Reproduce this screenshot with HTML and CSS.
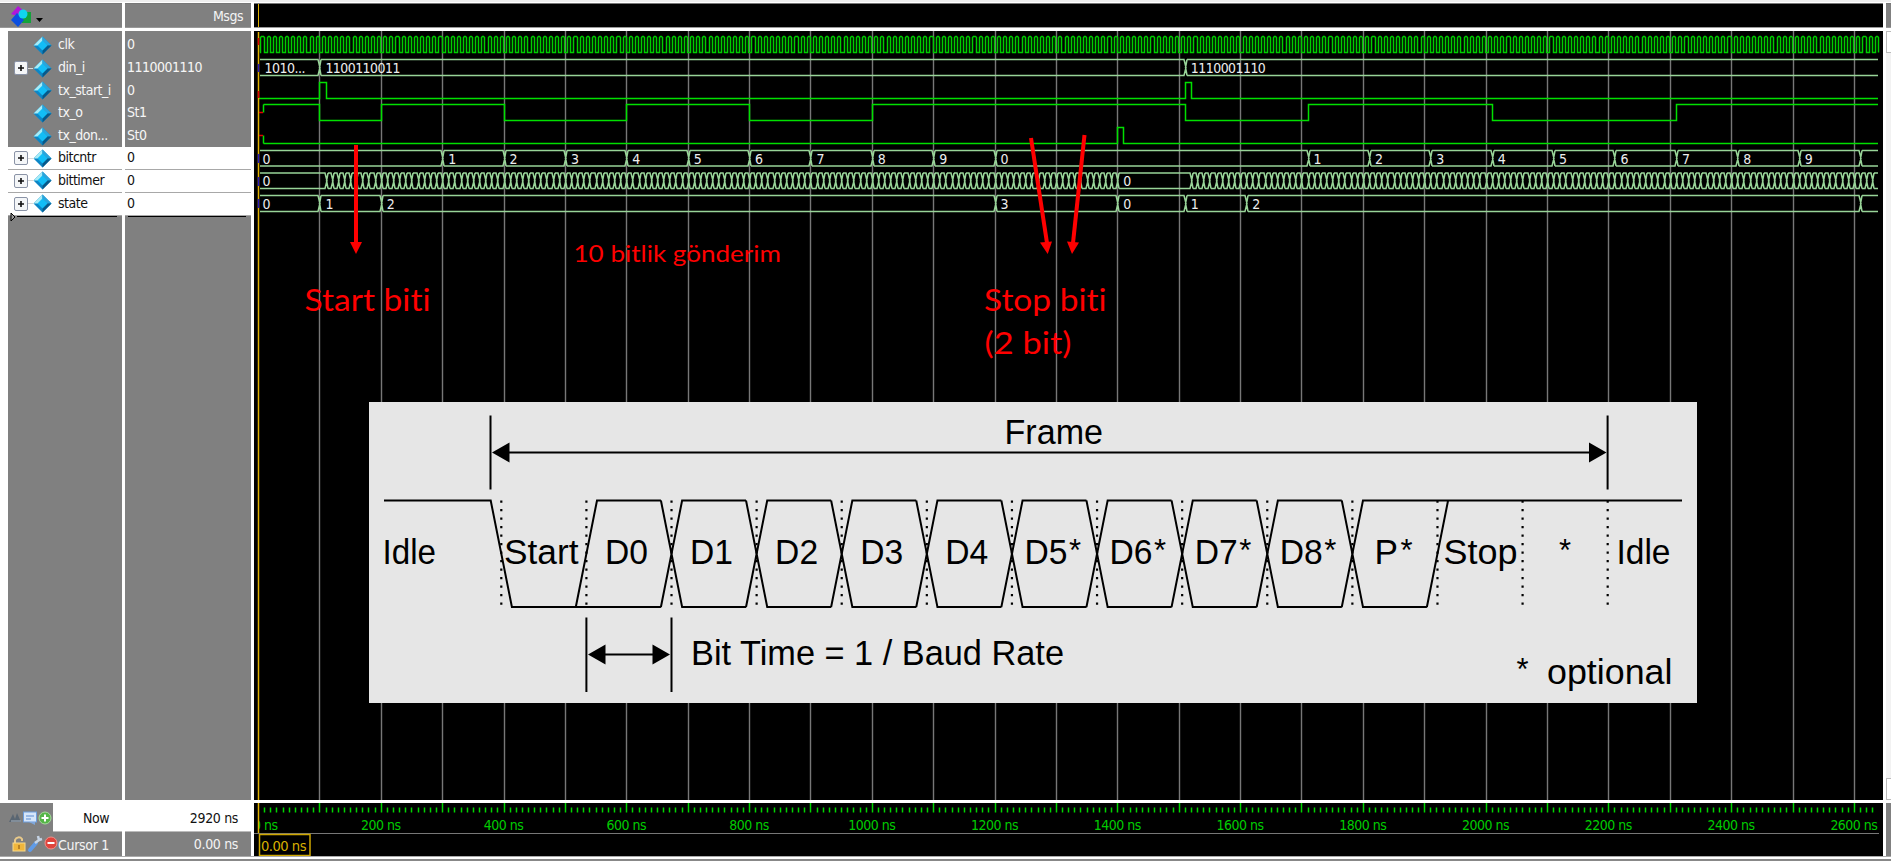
FILE: index.html
```html
<!DOCTYPE html>
<html lang="tr">
<head>
<meta charset="utf-8">
<title>Wave</title>
<link rel="stylesheet" href="styles.css">
</head>
<body>
<svg class="defs" width="0" height="0">
  <defs>
    <symbol id="diamond" viewBox="0 0 19 19">
      <path d="M9.500 0.500L18.500 9.500L9.500 18.500L0.500 9.500Z" fill="#0c86c6"/>
      <path d="M9.500 0.500V5L5 9.500H0.500Z" fill="#a6ecf8"/>
      <path d="M9.500 0.500L18.500 9.500H14L9.500 5Z" fill="#2aa5dc"/>
      <path d="M18.500 9.500L9.500 18.500V14L14 9.500Z" fill="#07598a"/>
      <path d="M9.500 4.500L14.500 9.500L9.500 14.500L4.500 9.500Z" fill="#12bdf6"/>
    </symbol>
    <symbol id="plus" viewBox="0 0 14 14">
      <rect x=".5" y=".5" width="13" height="13" rx="1.500" fill="#f4f6f8" stroke="#8a93a6"/>
      <path d="M4 7H10M7 4V10" stroke="#111" stroke-width="1.600"/>
    </symbol>
  </defs>
</svg>
<main class="window">
  <div class="head name-head">
    <svg class="logo" width="32" height="22" viewBox="0 0 32 22">
      <path d="M0 9L7 1L13 6L6 11Z" fill="#b117d8"/><rect x="11" y="7" width="9" height="11" fill="#13a33b"/>
      <path d="M6 8L13 15L7 22L0 15Z" fill="#0b4fe0"/><circle cx="12" cy="9" r="4.500" fill="#10d6ee"/>
      <path d="M25 13H32L28.500 17Z" fill="#000"/>
    </svg>
  </div>
  <div class="head msg-head">Msgs</div>
  <div class="head wave-head"><i class="cursor-line"></i></div>
  <div class="head end-head"></div>

  <div class="pane names" id="names"></div>
  <div class="pane values" id="values"></div>
  <div class="pane wave">
    <svg id="wave" width="1629" height="769" viewBox="254 31 1629 769"></svg>
    <svg class="frame" id="frame" width="1328" height="301" viewBox="369 402 1328 301"></svg>
  </div>
  <div class="pane scroll"><i></i><i></i></div>

  <div class="foot foot-names">
    <div class="now-row">
      <div class="tools">
        <svg width="44" height="16" viewBox="0 0 44 16">
          <path d="M0 12L4 4L6 9L8 3L12 12Z" fill="#5a6672"/><path d="M2 11H12" stroke="#a8b4c0"/>
          <rect x="14.500" y="2" width="13" height="10" fill="#d6e6fa" stroke="#6c9ddd"/><path d="M17 6H25M17 9H22" stroke="#5b8bd0"/><path d="M20 12H26V15Z" fill="#7fa6da"/>
          <circle cx="36" cy="8" r="6" fill="#55b548" stroke="#a6dc9c"/><path d="M32.500 8H39.500M36 4.500V11.500" stroke="#fff" stroke-width="2"/>
        </svg>
      </div>
      <div class="now">Now</div>
    </div>
    <div class="cursor-row">
      <svg width="46" height="18" viewBox="0 0 46 18">
        <path d="M3 8V5A4 4 0 0 1 10 4V6" fill="none" stroke="#e8c98a" stroke-width="2"/><rect x="1" y="8" width="12" height="8" fill="#f0b63c" stroke="#f7d98c"/><path d="M7 10V14" stroke="#a8701a" stroke-width="1.500"/>
        <path d="M18 15L24 8" stroke="#5f9be8" stroke-width="4" stroke-linecap="round"/><path d="M23 8L27 5M27 5L26 1M27 5L30 4" stroke="#c5d3e4" stroke-width="2.500"/>
        <circle cx="39" cy="8" r="6" fill="#e0443c" stroke="#f0908a"/><path d="M35.500 8H42.500" stroke="#fff" stroke-width="2"/>
      </svg>
      <span>Cursor 1</span>
    </div>
  </div>
  <div class="foot foot-values">
    <div class="now">2920 ns</div>
    <div class="cursor-value">0.00 ns</div>
  </div>
  <div class="foot foot-wave"><svg id="ruler" width="1629" height="53" viewBox="254 803 1629 53"></svg></div>
  <div class="foot end-foot"></div>
</main>
<script src="wave.js"></script>
</body>
</html>
```
FILE: styles.css
```css
* { box-sizing: border-box; }
body {
  margin: 0;
  background: #fff;
  overflow: hidden;
  font: 14px/22px "DejaVu Sans Condensed", "DejaVu Sans", sans-serif;
  font-stretch: condensed;
  letter-spacing: -0.5px;
}
.defs { position: absolute; }
.window {
  width: 1891px;
  height: 861px;
  display: grid;
  grid-template-columns: 122px 126px 1629px 5px;
  grid-template-rows: 25px 772px 56px;
  column-gap: 3px;
  padding-top: 3px;
  background: linear-gradient(#eee 0 2px, transparent 2px 856px, #aaa 856px 857px, #fff 857px 859px, #888 859px);
}
.head {
  background: #808080;
  height: 25px;
  border-top: 1px solid #777;
  border-bottom: 1px solid #999;
  color: #f4f4f4;
}
.name-head { padding: 1px 0 0 11px; }
.logo { display: block; }
.msg-head { text-align: right; padding: 1px 8px 0 0; }
.wave-head { background: #000; padding-left: 4px; }
.cursor-line { display: block; width: 1px; height: 23px; background: #e0b000; }
.pane {
  height: 769px;
  margin-top: 3px;
  background: #808080;
  padding-top: 3px;
}
.names { margin-left: 8px; }
.row {
  height: 22.7px;
  display: flex;
  align-items: center;
  color: #f6f6f6;
  white-space: nowrap;
}
.row span { padding-bottom: 2px; }
.row.light {
  background: #fff;
  color: #111;
  border-bottom: 1.500px solid #a8a8a8;
}
.names .row { padding-left: 6px; }
.toggle { width: 14px; height: 14px; }
.link { width: 5px; height: 1px; }
.open .link { background: #d8d8d8; }
.gem { width: 19px; height: 19px; margin-right: 6px; }
.values .row { padding-left: 2px; }
.end-mark { display: flex; align-items: center; height: 10px; margin-top: -4px; padding-right: 5px; }
.end-mark::after { content: ""; flex: 1; height: 1px; background: #000; }
.end-mark svg { width: 7px; height: 10px; margin-left: 2px; }
.values .end-mark { padding-left: 3px; }
.wave {
  position: relative;
  background: #000;
  padding: 0;
}
.wave svg { display: block; }
.wave .frame {
  position: absolute;
  left: 115px;
  top: 371px;
  background: #e6e6e6;
}
.scroll {
  background: #f2f2f2;
  padding: 0;
  display: flex;
  flex-direction: column;
  justify-content: space-between;
}
.scroll i { height: 22px; background: #fff; border: 1px solid #bbb; border-right: 0; }
.foot { background: #808080; height: 53px; margin-top: 3px; }
.now-row { display: flex; height: 29px; }
.tools { width: 53px; padding: 7px 0 0 9px; }
.now {
  flex: 1;
  height: 29px;
  background: #fff;
  color: #111;
  text-align: right;
  padding: 4px 13px 0 0;
  border-bottom: 1px solid #bbb;
}
.foot-values { color: #f4f4f4; letter-spacing: -0.35px; }
.cursor-value { text-align: right; padding: 1px 13px 0 0; }
.cursor-row { display: flex; padding: 3px 0 0 12px; color: #f4f4f4; white-space: nowrap; letter-spacing: -0.3px; }
.cursor-row span { line-height: 20px; }
.foot-wave { background: #000; }
.foot-wave svg { display: block; }

.grid { stroke: #777; stroke-width: 1.400; }
.sig { fill: none; stroke: #00e000; stroke-width: 1.500; }
.clk { fill: none; stroke: #00cc00; stroke-width: 1.500; }
.bus { fill: none; stroke: #98d498; stroke-width: 1.500; }
.unknown { fill: none; stroke: #e00000; stroke-width: 1.500; }
.init { fill: none; stroke: #2b1ab8; stroke-width: 1.500; }
.cursor { stroke: #e0b000; stroke-width: 1.500; }
.val { fill: #eee; font-size: 14px; }
.note { fill: #f00; font-family: Lato, sans-serif; letter-spacing: 0; font-variant-ligatures: none; }
.arrow { stroke: #f00; stroke-width: 4; }
.arrow-head { fill: #f00; }
.line { fill: none; stroke: #000; stroke-width: 2; }
.dots { stroke: #000; stroke-width: 2.200; stroke-dasharray: 2.200 6.300; }
.label { font: 35.500px "Liberation Sans", Arial, sans-serif; letter-spacing: 0; fill: #000; }
.star { font-size: 31px; }
.tick { stroke: #00d400; stroke-width: 1.500; }
.time { fill: #00cc00; font-size: 14px; }
.baseline { stroke: #777; stroke-width: 1.200; }
.cursor-box { fill: #000; stroke: #d0a800; stroke-width: 1.500; }
.cursor-time { fill: #d8b000; font-size: 14px; }
```
FILE: wave.js
```javascript
const END = 1878;
const X = t => 258.5 + t * 0.6138;
const P = t => Math.floor(X(t)) + 0.5;
const path = (d, cls) => `<path class="${cls}" d="${d}"/>`;
const text = (x, y, s, cls, extra = '') => `<text class="${cls}" x="${x}" y="${y}" ${extra}>${s}</text>`;
const fit = w => `textLength="${w}" lengthAdjust="spacingAndGlyphs"`;

// Signal name and value columns
const rows = [
  ['clk', '0'], ['din_i', '1110001110', 1], ['tx_start_i', '0'], ['tx_o', 'St1'], ['tx_don...', 'St0'],
  ['bitcntr', '0', 1, 1], ['bittimer', '0', 1, 1], ['state', '0', 1, 1]
];
document.getElementById('names').innerHTML = rows.map(([n, , open, light]) =>
  `<div class="row${light ? ' light' : ''}${open ? ' open' : ''}"><svg class="toggle">${open ? '<use href="#plus" width="14" height="14"/>' : ''}</svg>` +
  `<i class="link"></i><svg class="gem"><use href="#diamond" width="19" height="19"/></svg><span>${n}</span></div>`).join('') +
  '<div class="end-mark"><svg viewBox="0 0 7 10"><path d="M1 1V9L5 5Z" fill="#999" stroke="#000"/></svg></div>';
document.getElementById('values').innerHTML = rows.map(([, v, , light]) =>
  `<div class="row${light ? ' light' : ''}"><span>${v}</span></div>`).join('') + '<div class="end-mark"></div>';

// Waveforms
let w = '';
for (let t = 100; t <= 2600; t += 100) w += path(`M${P(t)} 31V800`, 'grid');

let clk = 'M260 52.5';
for (let t = 0; t < 2638; t += 10) {
  const a = P(t + 4), b = P(t + 9);
  clk += `H${a}V37.500L${a + 1} 36.500H${b - 1}L${b} 37.500V52.500`;
}
w += path(clk, 'clk');

function digital(start, level, edges, hi, lo) {
  let d = `M${start} ${level ? hi : lo}`;
  for (const t of edges) { level = !level; d += `H${P(t)}V${level ? hi : lo}`; }
  w += path(d + `H${END}`, 'sig');
}
digital(259, false, [100, 110, 1510, 1520], 82.5, 98.500);
digital(263.5, true, [100, 200, 400, 600, 800, 1000, 1510, 1710, 2010, 2310], 104.5, 120.5);
digital(263.5, false, [1400, 1410], 127.5, 143.5);
w += path('M263.5 104.5V112.5M263.500 143.500V135.500', 'sig');

function bus(edges, hi, lo, labels) {
  const m = (hi + lo) / 2;
  let x = 260, d = '';
  for (const t of edges) {
    const e = P(t);
    d += `M${x} ${hi}H${e - 1.5}L${e - .5} ${hi + 4}L${e + .5} ${m}L${e - .5} ${lo - 4}L${e - 1.5} ${lo}H${x}`;
    d += `M${e + 1.5} ${hi}L${e + .8} ${hi + 4}L${e} ${m}L${e + .8} ${lo - 4}L${e + 1.5} ${lo}`;
    x = e + 1.5;
  }
  d += `M${x} ${hi}H${END}M${x} ${lo}H${END}`;
  w += path(d, 'bus');
  for (const [t, s] of labels) w += text(t ? X(t) + 5.5 : s.length > 1 ? 264.5 : 262.5, lo - 2.5, s, 'val', s.length > 8 ? fit(74.5) : '');
}
bus([100, 1510], 59.5, 75.5, [[0, '1010...'], [100, '1100110011'], [1510, '1110001110']]);
const cnt = [], cl = [[0, '0']];
for (let i = 1; i <= 9; i++) { cnt.push(200 + i * 100); cl.push([200 + i * 100, '' + i]); }
cnt.push(1200); cl.push([1200, '0']);
for (let i = 1; i <= 9; i++) { cnt.push(1610 + i * 100); cl.push([1610 + i * 100, '' + i]); }
cnt.push(2610);
bus(cnt, 150.5, 166, cl);
const tim = [];
for (let t = 110; t <= 1400; t += 10) tim.push(t);
for (let t = 1520; t <= 2630; t += 10) tim.push(t);
bus(tim, 173, 188.5, [[0, '0'], [1400, '0']]);
bus([100, 200, 1200, 1400, 1510, 1610, 2610], 195.5, 211.5,
  [[0, '0'], [100, '1'], [200, '2'], [1200, '3'], [1400, '0'], [1510, '1'], [1610, '2']]);

w += path('M258.500 32V800', 'cursor');
w += path('M258.5 38V45M258.5 91V98M259 112.500H263M259 135.500H263', 'unknown');
w += path('M258.5 64V72M258.500 154V163M258.500 177V186M258.500 199V208', 'init');

w += text(304.5, 310.5, 'Start biti', 'note', `font-size="31" ${fit(126)}`);
w += text(573.5, 262, '10 bitlik gönderim', 'note', `font-size="23.500" ${fit(207.5)}`);
w += text(984, 310.5, 'Stop biti', 'note', `font-size="31" ${fit(122.5)}`);
w += text(984.5, 354, '(2 bit)', 'note', `font-size="31" ${fit(87)}`);
w += path('M356 145V243', 'arrow') + path('M350 242H362L356 254Z', 'arrow-head');
w += path('M1031 138L1047 243', 'arrow') + path('M1040 242.500L1052 241.500L1047.700 254Z', 'arrow-head');
w += path('M1084.500 135L1073 243', 'arrow') + path('M1067 241.500L1079 242.500L1072 254Z', 'arrow-head');
document.getElementById('wave').innerHTML = w;

// Serial frame diagram
const top_ = 500.5, bot = 607, s = 10.6, D = i => 501.3 + i * 85.107;
let f = path('M490.5 415.500V489.500M1607.600 415.500V489.500M500 452.600H1600', 'line');
f += path('M492 452.600L509.500 442.600V462.600ZM1606.500 452.600L1589 442.600V462.600Z', 'arrow-head-dark');
let d = `M384 ${top_}H${D(0) - s}L${D(0) + s} ${bot}H${D(2) - s}M${D(1) - s} ${bot}L${D(1) + s} ${top_}H${D(2) - s}`;
for (let i = 2; i <= 10; i++)
  d += `M${D(i) - s} ${top_}L${D(i) + s} ${bot}H${D(i + 1) - s}M${D(i) - s} ${bot}L${D(i) + s} ${top_}H${D(i + 1) - s}`;
d += `M${D(11) - s} ${bot}L${D(11) + s} ${top_}M${D(11) - s} ${top_}H1682`;
f += path(d, 'line');
for (let i = 0; i <= 13; i++) f += path(`M${D(i)} 500.600V606`, 'dots');
f += path('M586.400 617.500V692M671.500 617.500V692M600 654.600H660', 'line');
f += path('M588 654.600L605.500 644.600V664.600ZM670 654.600L652.500 644.600V664.600Z', 'arrow-head-dark');
const L = (x, y, str, width) => { f += text(x, y, str, 'label', width ? fit(width) : ''); };
const star = (x, y) => { f += text(x, y, '*', 'label star'); };
L(1004.5, 443.5, 'Frame', 98.5);
L(382.5, 563.7, 'Idle', 53.5);
L(504, 563.7, 'Start', 74.5);
['D0', 'D1', 'D2', 'D3', 'D4'].forEach((n, i) => L(D(i + 1) + 18.5, 563.7, n, 43));
['D5', 'D6', 'D7', 'D8'].forEach((n, i) => { L(D(i + 6) + 12.5, 563.7, n, 43); star(D(i + 6) + 57, 561); });
L(1374.5, 563.7, 'P', 23.5); star(1400.5, 561);
L(1443.5, 563.7, 'Stop', 74);
star(1559, 561);
L(1616.500, 563.7, 'Idle', 54);
L(691, 664.6, 'Bit Time = 1 / Baud Rate', 373);
star(1516.500, 679.5);
L(1547, 683.8, 'optional', 125.500);
document.getElementById('frame').innerHTML = f;

// Time ruler
let r = '';
for (let t = 10; t <= 2630; t += 10) r += path(`M${P(t)} ${t % 100 ? 807.5 : 803}V812.500`, 'tick');
for (let t = 200; t <= 2600; t += 200) r += text(X(t) - .5, 830, t + ' ns', 'time', `text-anchor="middle" textLength="${t < 1000 ? 39.5 : 47}" lengthAdjust="spacingAndGlyphs"`);
r += `<svg x="258" y="803" width="60" height="53" viewBox="258 803 60 53">${text(253, 830, '0 ns', 'time')}</svg>`;
r += path('M254 833.500H1879', 'baseline') + path('M258.500 803V833', 'cursor');
r += '<rect class="cursor-box" x="259.500" y="834.500" width="50.500" height="21"/>';
r += text(261, 851, '0.00 ns', 'cursor-time', fit(45));
document.getElementById('ruler').innerHTML = r;
```
